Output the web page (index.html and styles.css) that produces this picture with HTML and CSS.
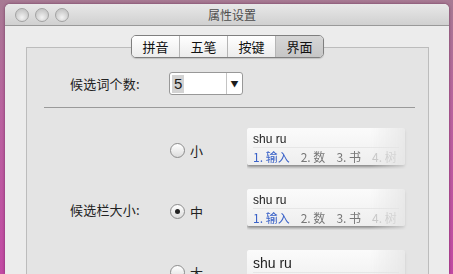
FILE: index.html
```html
<!DOCTYPE html>
<html lang="zh-CN">
<head>
    <meta charset="UTF-8">
    <meta name="viewport" content="width=device-width, initial-scale=1.0">
    <title>属性设置</title>
    <link rel="stylesheet" href="styles.css">
</head>
<body>
    <div class="desktop">
        <div class="window">
            <div class="titlebar">
                <div class="lights">
                    <span class="light"></span>
                    <span class="light"></span>
                    <span class="light"></span>
                </div>
                <div class="title">属性设置</div>
            </div>

            <div class="content">
                <div class="tabs">
                    <button class="tab">拼音</button>
                    <button class="tab">五笔</button>
                    <button class="tab">按键</button>
                    <button class="tab active">界面</button>
                </div>

                <div class="group">
                    <div class="count-row">
                        <span class="label">候选词个数:</span>
                        <div class="combo">
                            <span class="combo-value"><span class="sel">5</span></span>
                            <span class="combo-arrow">&#9660;</span>
                        </div>
                    </div>

                    <hr class="sep">

                    <div class="size-grid">
                        <span></span>
                        <label class="radio"><span class="dot"></span>小</label>
                        <div class="preview-wrap">
                            <div class="preview small">
                                <div class="pinyin">shu ru</div>
                                <div class="cands">
                                    <span class="cand first">1. 输入</span>
                                    <span class="cand">2. 数</span>
                                    <span class="cand">3. 书</span>
                                    <span class="cand faint">4. 树</span>
                                </div>
                            </div>
                        </div>

                        <span class="label">候选栏大小:</span>
                        <label class="radio"><span class="dot checked"></span>中</label>
                        <div class="preview-wrap">
                            <div class="preview medium">
                                <div class="pinyin">shu ru</div>
                                <div class="cands">
                                    <span class="cand first">1. 输入</span>
                                    <span class="cand">2. 数</span>
                                    <span class="cand">3. 书</span>
                                    <span class="cand faint">4. 树</span>
                                </div>
                            </div>
                        </div>

                        <span></span>
                        <label class="radio"><span class="dot"></span>大</label>
                        <div class="preview-wrap">
                            <div class="preview large">
                                <div class="pinyin">shu ru</div>
                                <div class="cands">
                                    <span class="cand first">1. 输入</span>
                                    <span class="cand">2. 数</span>
                                    <span class="cand">3. 书</span>
                                    <span class="cand faint">4. 树</span>
                                </div>
                            </div>
                        </div>
                    </div>
                </div>
            </div>
        </div>
    </div>
</body>
</html>
```

FILE: styles.css
```css
:root {
    --window: #ececec;
    --group: #e4e4e4;
    --border: #a8a8a8;
    --text: #1c1c1c;
    --blue: #3a62c8;
    --cjk: "Noto Sans CJK SC", "Liberation Sans", sans-serif;
}

html, body {
    margin: 0;
    height: 100%;
    overflow: hidden;
}

body {
    font-family: var(--cjk);
    color: var(--text);
    background: linear-gradient(to bottom, #a77a93 0, #b9639f 40%, #c24aa4 100%);
}

.desktop {
    padding: 4px 4px 0 5px;
    height: 100%;
    box-sizing: border-box;
}

.window {
    width: 444px;
    height: 100%;
    background: var(--window);
    border-radius: 5px 5px 0 0;
    box-shadow: 0 0 3px rgba(60, 0, 40, 0.5);
}

.titlebar {
    height: 21px;
    display: flex;
    align-items: center;
    border-radius: 5px 5px 0 0;
    background: linear-gradient(to bottom, #e8e8e8, #d0d0d0);
    border-bottom: 1px solid #999;
}

.lights {
    display: flex;
    gap: 6px;
    padding-left: 10px;
    width: 90px;
}

.light {
    width: 14px;
    height: 14px;
    border-radius: 50%;
    background: radial-gradient(circle at 50% 70%, #f2f2f2, #c9c9c9 70%);
    border: 1px solid #a3a3a3;
    box-sizing: border-box;
}

.title {
    flex: 1;
    text-align: center;
    padding-right: 90px;
    font-size: 12px;
    color: #4d4d4d;
    line-height: 21px;
}

.content {
    padding-top: 9px;
}

.tabs {
    position: relative;
    z-index: 1;
    display: flex;
    width: 193px;
    height: 23px;
    margin-left: 126px;
    border: 1px solid #7f7f7f;
    border-radius: 5px;
    overflow: hidden;
    box-sizing: border-box;
    box-shadow: 0 1px 1px rgba(0, 0, 0, 0.15);
}

.tab {
    flex: 1;
    border: none;
    border-left: 1px solid #b5b5b5;
    padding: 0;
    font-family: var(--cjk);
    font-size: 13px;
    color: #111;
    background: linear-gradient(to bottom, #ffffff, #ececec);
}

.tab:first-child {
    border-left: none;
}

.tab.active {
    background: linear-gradient(to bottom, #d6d6d6, #c6c6c6);
}

.group {
    margin: -11px 20px 0 21px;
    border: 1px solid #bcbcbc;
    border-bottom: none;
    background: var(--group);
    height: 300px;
}

.count-row {
    display: flex;
    align-items: center;
    height: 23px;
    margin-top: 24px;
    padding-left: 43px;
}

.label {
    width: 99px;
    font-size: 13px;
    letter-spacing: 0.2px;
    color: #222;
}

.combo {
    display: flex;
    width: 74px;
    height: 23px;
    border: 1px solid #989898;
    border-radius: 3px;
    background: #fff;
    box-sizing: border-box;
}

.combo-value {
    flex: 1;
    display: flex;
    align-items: center;
    padding-left: 2px;
}

.sel {
    background: #d3d3d3;
    font-family: "Liberation Sans", sans-serif;
    font-size: 15px;
    line-height: 18px;
    padding: 0 2px;
}

.combo-arrow {
    width: 15px;
    border-left: 1px solid #c4c4c4;
    font-size: 8px;
    display: flex;
    align-items: center;
    justify-content: center;
}

.sep {
    margin: 12px 13px 0 17px;
    border: none;
    border-top: 1px solid #9a9a9a;
}

.size-grid {
    display: grid;
    grid-template-columns: 100px 77px auto;
    grid-auto-rows: 37px;
    row-gap: 24px;
    align-items: center;
    margin-top: 22px;
    padding-left: 43px;
}

.radio {
    display: flex;
    align-items: center;
    gap: 5px;
    font-size: 13px;
    color: #222;
    margin-top: 4px;
}

.dot {
    width: 15px;
    height: 15px;
    border-radius: 50%;
    border: 1px solid #8c8c8c;
    background: linear-gradient(to bottom, #ffffff, #dcdcdc);
    box-sizing: border-box;
    display: flex;
    align-items: center;
    justify-content: center;
}

.dot.checked::after {
    content: "";
    width: 5px;
    height: 5px;
    border-radius: 50%;
    background: #222;
}

.preview-wrap {
    width: 170px;
    height: 37px;
    padding-bottom: 4px;
    -webkit-mask-image: linear-gradient(to right, #000 72%, transparent 100%);
    mask-image: linear-gradient(to right, #000 72%, transparent 100%);
}

.preview {
    width: 158px;
    height: 37px;
    box-sizing: border-box;
    padding: 4px 6px 0;
    background: linear-gradient(to bottom, #fbfbfb, #eeeeee);
    border-radius: 2px;
    box-shadow: 0 2px 3px rgba(0, 0, 0, 0.4);
}

.pinyin {
    font-family: "Liberation Sans", sans-serif;
    font-size: 12px;
    line-height: 15px;
    color: #222;
    border-bottom: 1px solid #e6e6e6;
}

.cands {
    display: flex;
    gap: 11px;
    font-size: 12px;
    line-height: 17px;
    color: #777;
}

.cand.first {
    color: var(--blue);
}

.cand.faint {
    color: #c4c4c4;
}

.preview.large .pinyin {
    font-size: 14px;
    line-height: 18px;
}
```
